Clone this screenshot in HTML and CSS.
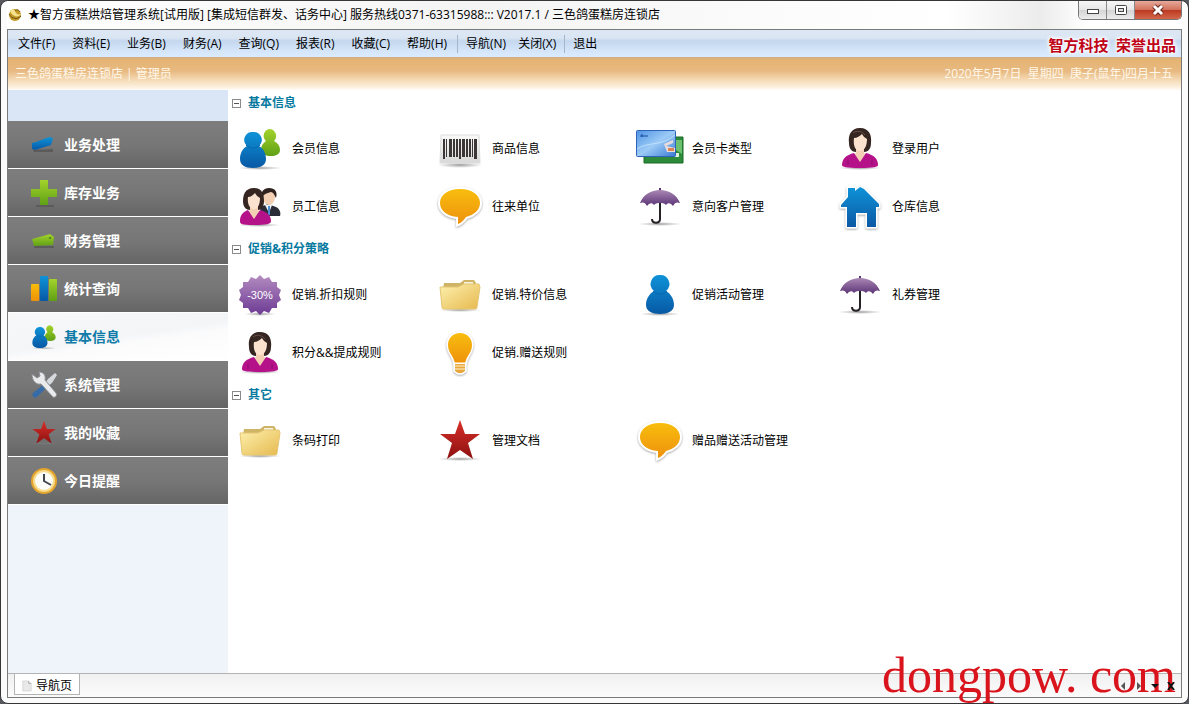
FILE: index.html
```html
<!DOCTYPE html>
<html lang="zh-CN">
<head>
<meta charset="utf-8">
<title>智方蛋糕烘焙管理系统</title>
<link rel="stylesheet" href="styles.css">
</head>
<body>
<svg class="defs" aria-hidden="true">
  <defs>
    <linearGradient id="gBlue" x1="0" y1="0" x2="0" y2="1"><stop offset="0" stop-color="#0f93d8"/><stop offset="1" stop-color="#0758a4"/></linearGradient>
    <linearGradient id="gGreen" x1="0" y1="0" x2="0" y2="1"><stop offset="0" stop-color="#a3d32c"/><stop offset="1" stop-color="#5fa015"/></linearGradient>
    <linearGradient id="gOrange" x1="0" y1="0" x2="0" y2="1"><stop offset="0" stop-color="#f8bd08"/><stop offset="1" stop-color="#ee9108"/></linearGradient>
    <linearGradient id="gPurple" x1="0" y1="0" x2="0" y2="1"><stop offset="0" stop-color="#a987b5"/><stop offset="1" stop-color="#5b3375"/></linearGradient>
    <linearGradient id="gBadge" x1="0" y1="0" x2="0" y2="1"><stop offset="0" stop-color="#b48cc0"/><stop offset="1" stop-color="#6c3a94"/></linearGradient>
    <linearGradient id="gRed" x1="0" y1="0" x2="0" y2="1"><stop offset="0" stop-color="#d9302a"/><stop offset="1" stop-color="#8c1010"/></linearGradient>
    <linearGradient id="gFolder" x1="0" y1="0" x2="1" y2="1"><stop offset="0" stop-color="#fdf0ae"/><stop offset="1" stop-color="#e6b94e"/></linearGradient>
    <linearGradient id="gCard" x1="0" y1="0" x2="1" y2="1"><stop offset="0" stop-color="#4f93e6"/><stop offset=".5" stop-color="#9ccbf6"/><stop offset="1" stop-color="#3a7ad4"/></linearGradient>
    <linearGradient id="gPaper" x1="0" y1="0" x2="0" y2="1"><stop offset="0" stop-color="#fafafa"/><stop offset="1" stop-color="#d8d8d8"/></linearGradient>
    <radialGradient id="gShade"><stop offset="0" stop-color="#777" stop-opacity=".75"/><stop offset="1" stop-color="#999" stop-opacity="0"/></radialGradient>
    <filter id="halo" x="-20%" y="-20%" width="140%" height="150%"><feDropShadow dx="0" dy="1" stdDeviation="1" flood-color="#666" flood-opacity=".6"/></filter>
  </defs>
  <symbol id="people" viewBox="0 0 48 48">
    <ellipse cx="24" cy="43" rx="22" ry="2" fill="url(#gShade)"/>
    <path d="M33 4a7 7 0 0 1 5 12c4 2 6 5 6 9 0 4-4 6-9 6s-10-2-10-6 2-7 5-9A7 7 0 0 1 33 4z" fill="url(#gGreen)"/>
    <path d="M17 7a8 8 0 0 1 6 14c4 2 7 7 7 13 0 6-5 9-13 9S4 40 4 34s3-11 7-13A8 8 0 0 1 17 7z" fill="url(#gBlue)"/>
    <path d="M10 20c4 4 10 4 14 0" fill="none" stroke="#0667b1" stroke-width="1"/>
  </symbol>
  <symbol id="person" viewBox="0 0 48 48">
    <ellipse cx="24" cy="43" rx="20" ry="2" fill="url(#gShade)"/>
    <path d="M24 4a9 9 0 0 1 6 16c5 3 8 8 8 14 0 6-6 9-14 9s-14-3-14-9c0-6 3-11 8-14A9 9 0 0 1 24 4z" fill="url(#gBlue)"/>
    <path d="M17 20c4 4 10 4 14 0" fill="none" stroke="#0667b1"/>
  </symbol>
  <symbol id="barcode" viewBox="0 0 48 48">
    <ellipse cx="24" cy="40" rx="23" ry="3" fill="url(#gShade)"/>
    <path d="M5 10h38l1 28H4z" fill="url(#gPaper)" stroke="#ddd"/>
    <path d="M7 14h2v20H7zM10 14h1v18h-1zM13 14h3v18h-3zM17 14h2v18h-2zM20 14h2v18h-2zM23 14h2v20h-2zM26 14h3v18h-3zM30 14h2v18h-2zM33 14h2v18h-2zM36 14h1v18h-1zM38 14h3v20h-3z" fill="#3c3637"/>
  </symbol>
  <symbol id="cards" viewBox="0 0 48 48">
    <path d="M8 12h39v26H8z" fill="#2c8a3a" stroke="#186a25"/><path d="M40 15h6v14l-6-4z" fill="#6cc070"/>
    <path d="M38 28h5v4h-5z" fill="#dff2df"/>
    <rect x=".5" y="5.500" width="39" height="26" rx="1" fill="url(#gCard)" stroke="#2f62b8"/>
    <path d="M1 24c12-8 24-2 38-14" stroke="#c9e6ff" fill="none" opacity=".8"/>
    <path d="M4 11h8M6 9v3" stroke="#174b9a"/>
    <path d="M28 19l9-4v3l-7 3 9 2v4h-8z" fill="#e9dcdc"/><path d="M32 23h6v3h-6z" fill="#dd8452"/>
  </symbol>
  <symbol id="woman" viewBox="0 0 48 48">
    <ellipse cx="24" cy="43" rx="21" ry="2" fill="url(#gShade)"/>
    <path d="M24 3c9 0 12 7 11 15 0 6-3 9-7 9h-8c-4 0-7-3-7-9C12 10 15 3 24 3z" fill="#352622"/>
    <path d="M20 21h8v7l4 3-8 10-8-10 4-3z" fill="#f3cfb4"/>
    <path d="M18 13c3 0 6-2 8-4 1 2 3 4 5 5 0 6-2 12-7 12s-7-6-6-13z" fill="#fbe2cf"/>
    <path d="M17 8c4-3 9-2 12 2" fill="none" stroke="#69504a"/>
    <path d="M18 28l6 9 6-9c8 2 12 6 12 12 0 2-4 3-18 3S6 42 6 40c0-6 4-10 12-12z" fill="#b5128a"/>
    <path d="M12 35v5M36 35v5" stroke="#8e0c70"/>
  </symbol>
  <symbol id="staff" viewBox="0 0 48 48">
    <ellipse cx="23" cy="42" rx="21" ry="2" fill="url(#gShade)"/>
    <path d="M24 24l8-3 8 3c4 2 5 6 4 9H25z" fill="#2a2d38"/><path d="M29 22l4 8 3-8z" fill="#eef4fa"/><path d="M33 23v9" stroke="#4b8fd0" stroke-width="2"/>
    <ellipse cx="33" cy="14" rx="6" ry="8" fill="#f3cfb4"/>
    <path d="M26 14c-2-6 3-9 7-9 6 0 9 4 7 10-2-4-3-6-5-6-3 1-6 1-9 5z" fill="#2e211e"/>
    <path d="M18 5c8 0 10 6 10 13 0 6-3 9-6 9h-8c-4 0-7-3-7-9S9 5 18 5z" fill="#352622"/>
    <path d="M14 21h8v6l3 3-7 9-7-9 3-3z" fill="#f3cfb4"/>
    <path d="M12 14c3 0 5-2 7-4 1 2 3 4 5 5 0 6-2 11-6 11s-7-5-6-12z" fill="#fbe2cf"/>
    <path d="M12 27l6 9 6-9c7 2 11 5 11 11 0 3-4 4-17 4S4 41 4 38c0-6 3-9 8-11z" fill="#b5128a"/>
  </symbol>
  <symbol id="bubble" viewBox="0 0 48 48">
    <path d="M24 6c12 0 20 6 20 14 0 7-6 12-14 14-2 3-5 6-8 7v-7C10 33 4 27 4 20 4 12 12 6 24 6z" fill="url(#gOrange)" stroke="#fff" stroke-width="4" paint-order="stroke" filter="url(#halo)"/>
  </symbol>
  <symbol id="umbrella" viewBox="0 0 48 48">
    <ellipse cx="24" cy="41" rx="22" ry="2" fill="url(#gShade)"/>
    <path d="M24 18v18c0 5-8 5-8 0" fill="none" stroke="#242024" stroke-width="2"/>
    <path d="M24 5v4" stroke="#5b3375" stroke-width="2"/>
    <path d="M24 7c9 0 17 5 20 13-3-1-5-1-7 3-2-3-5-4-7-1-2-2-4-2-6-2s-4 0-6 2c-2-3-5-2-7 1-2-4-4-4-7-3C7 12 15 7 24 7z" fill="url(#gPurple)"/>
  </symbol>
  <symbol id="house" viewBox="0 0 48 48">
    <path d="M24 4l4 2 15 15v3h-3v20h-9V30H20v14h-9V24H5v-2l7-8V5h7v3z" fill="url(#gBlue)" stroke="#fff" stroke-width="3" paint-order="stroke" stroke-linejoin="round" filter="url(#halo)"/>
  </symbol>
  <symbol id="folder" viewBox="0 0 48 48">
    <ellipse cx="24" cy="39" rx="21" ry="2" fill="url(#gShade)"/>
    <path d="M8 12h16l4-3h10l2 3v6H7z" fill="#cfb466"/><path d="M28 11h9v3h-9z" fill="#f5f2e2"/>
    <path d="M4 16h18l6-3h15l1 3-3 20c0 2-1 2-3 2H9c-2 0-3 0-3-2z" fill="url(#gFolder)" stroke="#e5c673"/>
  </symbol>
  <symbol id="bulb" viewBox="0 0 48 48">
    <g filter="url(#halo)" stroke="#fff" stroke-width="3" paint-order="stroke">
    <path d="M24 4c7 0 12 5 12 12 0 8-6 11-7 19H19c-1-8-7-11-7-19C12 9 17 4 24 4z" fill="url(#gOrange)"/>
    <path d="M19 35h10v7l-3 2h-4l-3-2z" fill="#e9a63a"/></g>
    <path d="M19 37h10M19 40h10" stroke="#fff3d8"/>
  </symbol>
  <symbol id="star" viewBox="0 0 48 48">
    <ellipse cx="24" cy="42" rx="22" ry="2" fill="url(#gShade)"/>
    <path d="M24 3l5 14h15L32 26l5 16-13-9-13 9 5-16L4 17h15z" fill="url(#gRed)"/>
  </symbol>
  <symbol id="pen" viewBox="0 0 28 28">
    <path d="M3 19l20-1v3H4z" fill="#444" opacity=".5"/><path d="M2 12l4-1 13-5 4 1-2 7-16 5-3-1z" fill="url(#gBlue)"/>
  </symbol>
  <symbol id="tag" viewBox="0 0 28 28">
    <path d="M4 19h20v2H4z" fill="#444" opacity=".5"/><path d="M2 12l18-5 4 3-1 8-19 1z" fill="url(#gGreen)"/><circle cx="20" cy="11" r="1" fill="#476f14"/>
  </symbol>
  <symbol id="plus" viewBox="0 0 28 28">
    <path d="M6 26h18v2H6z" fill="#444" opacity=".4"/><path d="M10 1h8v9h9v8h-9v8h-8v-8H1v-8h9z" fill="url(#gGreen)"/>
  </symbol>
  <symbol id="bars" viewBox="0 0 28 28">
    <rect x="1" y="9" width="8" height="17" rx="1" fill="url(#gOrange)"/><rect x="10" y="1" width="8" height="25" rx="1" fill="url(#gBlue)"/><rect x="19" y="4" width="8" height="22" rx="1" fill="url(#gGreen)"/>
  </symbol>
  <symbol id="tools" viewBox="0 0 28 28">
    <path d="M25 2l2 2-5 8-7 5-2-2 5-7z" fill="#d5d8dc"/><path d="M13 14l3 3-9 9c-2 2-6-1-4-4z" fill="#356ca8"/>
    <path d="M2 3l5 4 3-2-1-4c5 0 7 4 6 8l11 13c2 3-2 6-4 3L11 13c-5 1-9-3-9-10z" fill="#e9eaec" stroke="#8b8f95" stroke-width="1"/>
  </symbol>
  <symbol id="clock" viewBox="0 0 28 28">
    <circle cx="14" cy="14" r="13" fill="#e2a42d"/><circle cx="14" cy="14" r="11" fill="#f8dc8c"/><circle cx="14" cy="14" r="9" fill="#fbfbf8"/>
    <path d="M14 7v7l7 4" fill="none" stroke="#41464e" stroke-width="2"/>
  </symbol>
</svg>

<div class="window">
  <header class="titlebar">
    <svg class="app-icon" viewBox="0 0 16 16" aria-hidden="true"><circle cx="8" cy="8" r="6" fill="#c39a28"/><path d="M3 4c1-2 4-2 5 0 1 3 3 4 6 3-2 4-9 3-11-3z" fill="#f5e28b"/><path d="M2 7c3 5 8 6 12 2M8 4c2-2 4-1 5 1" fill="none" stroke="#6d5010" stroke-width="1"/></svg>
    <h1 class="title">★智方蛋糕烘焙管理系统[试用版] [集成短信群发、话务中心] 服务热线0371-63315988::: V2017.1 / 三色鸽蛋糕房连锁店</h1>
    <div class="win-buttons">
      <button class="win-btn" aria-label="最小化"><svg viewBox="0 0 14 12"><rect x="1.500" y="5.500" width="11" height="4" fill="#fff" stroke="#444"/></svg></button>
      <button class="win-btn" aria-label="最大化"><svg viewBox="0 0 14 12"><rect x="1.500" y="1.500" width="11" height="9" rx="1" fill="#fff" stroke="#444"/><rect x="4.500" y="4.500" width="5" height="3" fill="#ddd" stroke="#444"/></svg></button>
      <button class="win-btn win-close" aria-label="关闭"><svg viewBox="0 0 14 12"><path d="M3 2l8 8M11 2l-8 8" stroke="#6b2a22" stroke-width="5"/><path d="M3 2l8 8M11 2l-8 8" stroke="#fff" stroke-width="3"/></svg></button>
    </div>
  </header>

  <div class="frame">
    <nav class="menubar">
      <button class="menu">文件(F)</button><button class="menu">资料(E)</button><button class="menu">业务(B)</button><button class="menu">财务(A)</button><button class="menu">查询(Q)</button><button class="menu">报表(R)</button><button class="menu">收藏(C)</button><button class="menu">帮助(H)</button>
      <span class="sep"></span>
      <button class="menu tight">导航(N)</button><button class="menu tight">关闭(X)</button>
      <span class="sep"></span>
      <button class="menu tight">退出</button>
      <strong class="brand">智方科技&nbsp; 荣誉出品</strong>
    </nav>
    <div class="banner"><span>三色鸽蛋糕房连锁店 | 管理员</span><span>2020年5月7日&nbsp; 星期四&nbsp; 庚子(鼠年)四月十五</span></div>

    <div class="body">
      <aside class="sidebar">
        <button class="side"><svg><use href="#pen"/></svg>业务处理</button>
        <button class="side"><svg><use href="#plus"/></svg>库存业务</button>
        <button class="side"><svg><use href="#tag"/></svg>财务管理</button>
        <button class="side"><svg><use href="#bars"/></svg>统计查询</button>
        <button class="side active"><svg><use href="#people"/></svg>基本信息</button>
        <button class="side"><svg><use href="#tools"/></svg>系统管理</button>
        <button class="side"><svg><use href="#star"/></svg>我的收藏</button>
        <button class="side"><svg><use href="#clock"/></svg>今日提醒</button>
      </aside>
      <main class="content">
        <section class="group">
          <h2 class="group-title"><button class="toggle" aria-label="折叠"></button>基本信息</h2>
          <div class="items">
            <a class="item" href="#"><svg><use href="#people"/></svg>会员信息</a>
            <a class="item" href="#"><svg><use href="#barcode"/></svg>商品信息</a>
            <a class="item" href="#"><svg><use href="#cards"/></svg>会员卡类型</a>
            <a class="item" href="#"><svg><use href="#woman"/></svg>登录用户</a>
            <a class="item" href="#"><svg><use href="#staff"/></svg>员工信息</a>
            <a class="item" href="#"><svg><use href="#bubble"/></svg>往来单位</a>
            <a class="item" href="#"><svg><use href="#umbrella"/></svg>意向客户管理</a>
            <a class="item" href="#"><svg><use href="#house"/></svg>仓库信息</a>
          </div>
        </section>
        <section class="group">
          <h2 class="group-title"><button class="toggle" aria-label="折叠"></button>促销&amp;积分策略</h2>
          <div class="items">
            <a class="item" href="#"><svg viewBox="0 0 48 48">
              <ellipse cx="24" cy="43" rx="16" ry="2" fill="url(#gShade)"/>
              <path d="M24 4l4 4 5-2 3 5 5 0 0 5 4 3-2 5 2 5-4 3 0 5-5 0-3 5-5-2-4 4-4-4-5 2-3-5-5 0 0-5-4-3 2-5-2-5 4-3 0-5 5 0 3-5 5 2z" fill="url(#gBadge)"/>
              <text x="24" y="28" text-anchor="middle" class="badge-text">-30%</text>
            </svg>促销.折扣规则</a>
            <a class="item" href="#"><svg><use href="#folder"/></svg>促销.特价信息</a>
            <a class="item" href="#"><svg><use href="#person"/></svg>促销活动管理</a>
            <a class="item" href="#"><svg><use href="#umbrella"/></svg>礼券管理</a>
            <a class="item" href="#"><svg><use href="#woman"/></svg>积分&amp;&amp;提成规则</a>
            <a class="item" href="#"><svg><use href="#bulb"/></svg>促销.赠送规则</a>
          </div>
        </section>
        <section class="group">
          <h2 class="group-title"><button class="toggle" aria-label="折叠"></button>其它</h2>
          <div class="items">
            <a class="item" href="#"><svg><use href="#folder"/></svg>条码打印</a>
            <a class="item" href="#"><svg><use href="#star"/></svg>管理文档</a>
            <a class="item" href="#"><svg><use href="#bubble"/></svg>赠品赠送活动管理</a>
          </div>
        </section>
      </main>
    </div>

    <footer class="tabs">
      <button class="tab"><svg viewBox="0 0 12 14" aria-hidden="true"><path d="M1 1h7l3 3v9H1z" fill="#e9e9e9" stroke="#d2d2d2"/><path d="M8 1v3h3" fill="none" stroke="#aaa"/></svg>导航页</button>
      <div class="tab-tools">
        <button class="tool" aria-label="上一页"><svg viewBox="0 0 8 8"><path d="M6 0v8L2 4z" fill="#555"/></svg></button>
        <button class="tool" aria-label="下一页"><svg viewBox="0 0 8 8"><path d="M2 0v8l4-4z" fill="#555"/></svg></button>
        <button class="tool" aria-label="列表"><svg viewBox="0 0 8 8"><path d="M0 2h8L4 6z" fill="#111"/></svg></button>
        <button class="tool front" aria-label="关闭标签"><svg viewBox="0 0 8 8"><path d="M1 0l6 8M7 0L1 8" stroke="#111" stroke-width="2"/></svg></button>
      </div>
    </footer>
  </div>
  <div class="watermark">dongpow. com</div>
</div>
</body>
</html>
```
FILE: styles.css
```css
* { box-sizing: border-box; }
body {
  margin: 0;
  background: #55585c;
  color: #000;
  font: 12px/16px "Open Sans", "Noto Sans CJK SC", sans-serif;
}
button {
  margin: 0;
  padding: 0;
  border: 0;
  background: none;
  color: inherit;
  font: inherit;
}
svg { display: block; flex: none; }
.defs { position: absolute; width: 0; height: 0; }

.window {
  position: relative;
  display: flex;
  flex-direction: column;
  min-height: 100vh;
  padding: 0 6px 5px;
  border: 1px solid #37343a;
  border-radius: 8px;
  background: #fbfbfb;
}
.titlebar {
  display: flex;
  height: 28px;
  background: linear-gradient(90deg, #fff 0%, #f4f4f4 40%, #fcfcfc 68%, #fff 80%, #ececec 88%, #fff 92%);
}
.app-icon { width: 16px; height: 16px; margin: 6px 5px 0 0; }
.title {
  flex: 1;
  margin: 0;
  font-size: 12px;
  font-weight: 400;
  line-height: 28px;
  white-space: nowrap;
}
.win-buttons {
  display: flex;
  height: 19px;
  border: 1px solid #777;
  border-top: 0;
  border-radius: 0 0 5px 5px;
  overflow: hidden;
}
.win-btn {
  display: grid;
  place-items: center;
  width: 28px;
  border-right: 1px solid #888;
  background: linear-gradient(#f6f6f6, #e6e6e6 50%, #d4d4d4 51%, #ececec);
}
.win-btn svg { width: 14px; height: 12px; }
.win-close {
  width: 46px;
  border: 0;
  background: linear-gradient(#e5a99b, #d4735d 48%, #bd3a22 52%, #d2674a);
}

.frame {
  flex: 1;
  display: flex;
  flex-direction: column;
  border: 1px solid #7a7a7a;
  background: #fff;
}
.menubar {
  display: flex;
  align-items: center;
  height: 27px;
  padding-left: 1px;
  background: linear-gradient(#dde7f4 0%, #dae5f3 30%, #c4d7ee 40%, #d4e5fa 75%, #dbebff 100%);
}
.menu { padding: 0 8px 0 9px; white-space: nowrap; }
.menu.tight { padding: 0 6px; }
.sep { width: 1px; height: 18px; margin: 0 2px; background: #a5b5ca; }
.brand {
  margin-left: auto;
  padding: 5px 5px 0;
  color: #c00418;
  font: 700 15px/22px "Liberation Serif", "Noto Sans CJK SC", sans-serif;
  text-shadow: 0 0 2px #fff, 0 0 3px #fff, 0 0 4px #fff, 0 0 6px #fff;
  white-space: nowrap;
}
.banner {
  display: flex;
  justify-content: space-between;
  align-items: center;
  height: 33px;
  padding: 0 8px 0 7px;
  background: linear-gradient(#cfae85 0, #e5b473 3px, #e8b981 14px, #f3d7b0 22px, #fdf3e4 31px, #fffdf9);
  color: #fff8ea;
}

.body { flex: 1; display: flex; }
.sidebar {
  width: 220px;
  flex: none;
  padding-top: 31px;
  background: linear-gradient(#dae6f5 31px, #eff4fb 31px);
}
.side {
  display: flex;
  align-items: center;
  gap: 6px;
  width: 100%;
  height: 48px;
  padding-left: 22px;
  border-bottom: 1px solid #fff;
  background: linear-gradient(#7d7d7d, #777 50%, #656565);
  color: #fff;
  font-size: 14px;
  font-weight: 700;
  line-height: 20px;
}
.side svg { width: 28px; height: 28px; }
.side.active {
  background: linear-gradient(172deg, #f8f8f9 0%, #f3f5f7 50%, #fbfbfc 60%, #fff 100%);
  color: #107ba8;
}

.content { flex: 1; padding: 1px 0 0 4px; }
.group { padding-bottom: 1px; }
.group-title {
  display: flex;
  align-items: center;
  gap: 7px;
  height: 24px;
  margin: 0 0 5px;
  color: #077a9f;
  font-size: 12px;
  font-weight: 700;
}
.toggle {
  width: 9px;
  height: 9px;
  border: 1px solid #8a8a8a;
  background: linear-gradient(#555, #555) center / 5px 1px no-repeat #fff;
}
.items {
  display: grid;
  grid-template-columns: repeat(auto-fill, 200px);
  grid-auto-rows: 58px;
  padding-left: 4px;
}
.item {
  display: flex;
  align-items: center;
  gap: 8px;
  color: #000;
  text-decoration: none;
  white-space: nowrap;
}
.item svg { width: 48px; height: 48px; }
.badge-text { fill: #fff; font: 11px "Liberation Sans", sans-serif; }

.tabs {
  display: flex;
  justify-content: space-between;
  height: 24px;
  padding: 0 6px;
  border-top: 1px solid #b4b4b4;
  background: linear-gradient(#f0f0f0, #fcfcfc);
}
.tab {
  display: flex;
  align-items: center;
  gap: 4px;
  height: 21px;
  padding: 3px 7px 0;
  border: 1px solid #b4b4b4;
  border-top: 0;
  background: #fff;
}
.tab svg { width: 10px; height: 14px; }
.tab-tools { display: flex; align-items: center; gap: 8px; }
.tool svg { width: 8px; height: 8px; }
.tool { position: relative; z-index: 1; }

.watermark {
  position: absolute;
  right: 12px;
  bottom: 0;
  color: #d9141c;
  font: 50px/56px "Liberation Serif", serif;
  pointer-events: none;
}
```
